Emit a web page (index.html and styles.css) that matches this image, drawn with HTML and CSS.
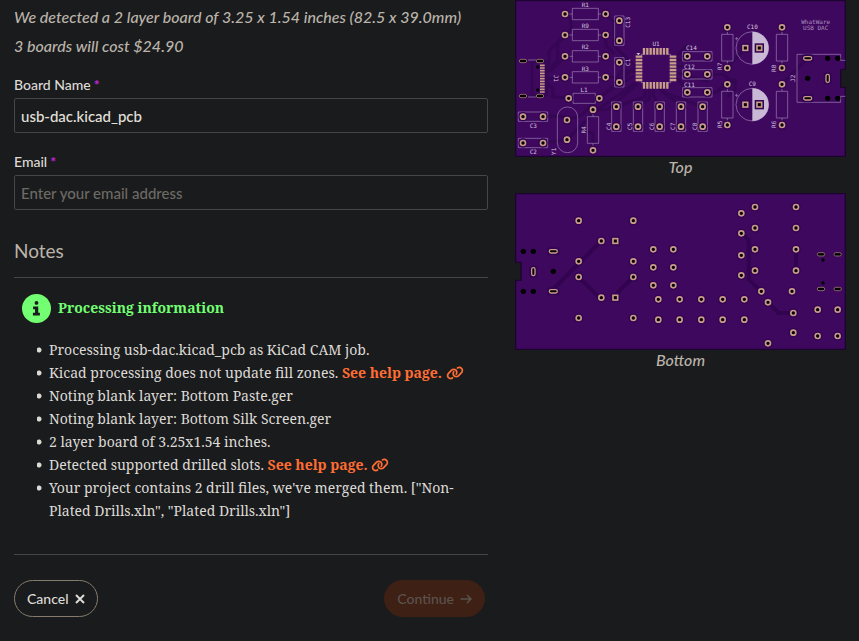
FILE: index.html
```html
<!DOCTYPE html>
<html lang="en">
<head>
<meta charset="utf-8">
<title>Board order</title>
<link rel="stylesheet" href="styles.css">
</head>
<body>
<svg class="defs" aria-hidden="true">
  <defs>
    <g id="pad"><circle class="halo" r="14"/><circle class="ring" r="7.5"/></g>
    <g id="sq"><rect class="halo" x="-14" y="-14" width="28" height="28"/><rect class="ring" x="-7" y="-7" width="14" height="14"/></g>
    <g id="slot"><rect class="halo" x="-18" y="-12" width="36" height="24" rx="8"/><rect class="ring thin" x="-12" y="-5" width="24" height="10" rx="5"/></g>
    <g id="slotv"><use href="#slot" transform="rotate(90)"/></g>
    <g id="usb"><rect class="ring dark" x="-11" y="-5" width="22" height="10" rx="5"/></g>
    <g id="hole"><circle r="8"/></g>
    <g id="resh"><path class="silk" d="M-52 0h14m76 0h14M-39-17h78v34h-78z"/><use href="#pad" x="-61"/><use href="#pad" x="61"/></g>
    <g id="resv"><path class="silk" d="M0-52v12m0 80v12M-17-40h34v80h-34z"/><use href="#pad" y="-61"/><use href="#pad" y="61"/></g>
    <g id="caph"><path class="silk" d="M-44-14h88v28h-88z"/><use href="#pad" x="-30"/><use href="#pad" x="30"/></g>
    <g id="capv"><path class="silk" d="M-14-44h28v88h-28z"/><use href="#pad" y="-30"/><use href="#pad" y="30"/></g>
    <g id="elco"><circle class="silk" r="49"/><path class="fill" d="M0-49a49 49 0 0 1 0 98z"/><path class="silk" d="M-52-28h10m-5-5v10"/><use href="#sq" x="-21"/><use href="#sq" x="21"/></g>
    <path id="pins" class="pins" d="M-36 0v20m10-20v20m10-20v20m10-20v20m10-20v20m10-20v20m10-20v20m10-20v20"/>
    <path id="link" d="M579.800 267.700c56.500-56.500 56.500-148 0-204.500c-50-50-128.800-56.500-186.300-15.400l-1.600 1.100c-14.400 10.300-17.700 30.300-7.400 44.600s30.300 17.700 44.600 7.400l1.600-1.100c32.100-22.900 76-19.300 103.800 8.600c31.500 31.500 31.500 82.500 0 114L422.300 334.800c-31.500 31.500-82.500 31.500-114 0c-27.900-27.900-31.500-71.800-8.600-103.800l1.100-1.600c10.300-14.400 6.900-34.400-7.400-44.600s-34.400-6.900-44.600 7.400l-1.100 1.600C206.500 251.200 213 330 263 380c56.500 56.500 148 56.500 204.500 0L579.800 267.700zM60.200 244.300c-56.500 56.500-56.500 148 0 204.500c50 50 128.800 56.500 186.300 15.400l1.600-1.100c14.400-10.300 17.700-30.300 7.400-44.600s-30.300-17.700-44.600-7.400l-1.600 1.100c-32.100 22.900-76 19.300-103.800-8.600C74 372 74 321 105.500 289.500L217.700 177.200c31.500-31.500 82.500-31.500 114 0c27.900 27.900 31.500 71.800 8.600 103.900l-1.100 1.600c-10.300 14.400-6.900 34.400 7.400 44.600s34.400 6.900 44.600-7.400l1.100-1.600C433.500 260.800 427 182 377 132c-56.500-56.500-148-56.500-204.500 0L60.200 244.300z"/>
  </defs>
</svg>
<main class="page">
  <form class="order">
    <p class="lead">We detected a 2 layer board of 3.25 x 1.54 inches (82.5 x 39.0mm)</p>
    <p class="lead">3 boards will cost $24.90</p>
    <div class="field">
      <label for="name">Board Name<span class="req">*</span></label>
      <input id="name" type="text" value="usb-dac.kicad_pcb">
    </div>
    <div class="field">
      <label for="email">Email<span class="req">*</span></label>
      <input id="email" type="email" placeholder="Enter your email address">
    </div>
    <h2>Notes</h2>
    <section class="notes">
      <h3><svg class="info" viewBox="0 0 30 30" aria-hidden="true"><circle cx="15" cy="15" r="15"/><path d="M15 7.200a2 2 0 1 1 0 4a2 2 0 1 1 0-4zM11.500 13h5.300v6.500h1.700v2.800h-7.200v-2.800h2.200v-3.700h-2z"/></svg>Processing information</h3>
      <ul>
        <li>Processing usb-dac.kicad_pcb as KiCad CAM job.</li>
        <li>Kicad processing does not update fill zones. <a href="#fill">See help page. <svg class="chain" viewBox="0 0 640 512" aria-hidden="true"><use href="#link"/></svg></a></li>
        <li>Noting blank layer: Bottom Paste.ger</li>
        <li>Noting blank layer: Bottom Silk Screen.ger</li>
        <li>2 layer board of 3.25x1.54 inches.</li>
        <li>Detected supported drilled slots. <a href="#slots">See help page. <svg class="chain" viewBox="0 0 640 512" aria-hidden="true"><use href="#link"/></svg></a></li>
        <li>Your project contains 2 drill files, we've merged them. ["Non-Plated Drills.xln", "Plated Drills.xln"]</li>
      </ul>
    </section>
    <div class="actions">
      <button type="button" class="cancel">Cancel <svg viewBox="0 0 10 10" aria-hidden="true"><path d="M1 1l8 8m0-8l-8 8"/></svg></button>
      <button type="submit" class="go" disabled>Continue <svg class="arrow" viewBox="0 0 12 10" aria-hidden="true"><path d="M0.500 5h10.500M7 1l4 4l-4 4"/></svg></button>
    </div>
  </form>
  <div class="boards">
    <figure>
      <svg class="board" viewBox="15 0 993 471" role="img" aria-label="Top side">
        <path class="substrate" d="M17 2h989v206h-14v54h14v207h-989z"/>
        <g class="traces">
          <path d="M165 105l-48 48v38l-17 17M165 169l-40 40-22 10M165 42l18 18v30l-40 40v50l-30 34M103 235h62M100 245l28 20v25l48 5M287 42l25 25v70l60 60M287 232h35l15-18h40M287 105v30l26 26M99 349h72M99 428l72-9M171 360l40-12 60-60 100-60M171 419l35-35 50-50 120-85M249 328h45l90-78M249 451v-50l-40-15M268 295l110-95M405 262v28l-86 29M418 262v35l-34 22M430 262v25l19 32M443 262l70 57M460 262v15l118 42M498 180h40M498 200h34M498 220h30l16 10 50 15M498 232l40 45M650 205l56-61M592 223h50l20 20h20M592 277h30l35-38h18v30l-23 22M893 175l-77 77M498 170l34-35"/>
          <path d="M66 185v102M110 185v102M66 185h44M66 287h44"/>
        </g>
        <use href="#resh" x="226" y="42"/><use href="#resh" x="226" y="105"/><use href="#resh" x="226" y="169"/><use href="#resh" x="226" y="232"/>
        <path class="silk" d="M189 280h67v30h-67z"/><use href="#pad" x="176" y="295"/><use href="#pad" x="268" y="295"/>
        <use href="#capv" x="328" y="92"/><use href="#capv" x="328" y="217"/>
        <use href="#caph" x="69" y="350"/><use href="#caph" x="69" y="429"/>
        <rect class="silk" x="142" y="321" width="61" height="137" rx="30"/><use href="#pad" x="171" y="360"/><use href="#pad" x="171" y="419"/>
        <use href="#resv" x="249" y="390"/>
        <use href="#capv" x="319" y="350"/><use href="#capv" x="384" y="350"/><use href="#capv" x="449" y="350"/><use href="#capv" x="513" y="350"/><use href="#capv" x="578" y="350"/>
        <path class="silk" d="M394 170v-7h7M474 163h8v7M394 241v7h7M482 241v7h-8M54 180h24M54 291h24"/><path class="fill" d="M379 159h12l-6 7z"/>
        <use href="#pins" x="438" y="144"/><use href="#pins" x="438" y="246"/>
        <use href="#pins" transform="translate(397 206) rotate(90)"/><use href="#pins" transform="translate(499 206) rotate(90)"/>
        <path class="pins usb" d="M90 196h14m-14 8h14m-14 8h14m-14 8h14m-14 8h14m-14 8h14m-14 8h14m-14 8h14m-14 8h14m-14 8h14m-14 8h14"/>
        <circle cx="83" cy="201" r="5"/><circle cx="83" cy="270" r="5"/>
        <use href="#usb" x="39" y="183"/><use href="#usb" x="90" y="183"/><use href="#usb" x="39" y="288"/><use href="#usb" x="90" y="288"/>
        <use href="#caph" x="562" y="169"/><use href="#caph" x="562" y="223"/><use href="#caph" x="562" y="277"/>
        <use href="#resv" x="652" y="143"/><use href="#resv" x="652" y="314"/><use href="#resv" x="816" y="143"/><use href="#resv" x="816" y="314"/>
        <use href="#elco" x="727" y="144"/><use href="#elco" x="727" y="314"/>
        <path class="silk" d="M1006 181h-14v-18h-131v144h131v-18h14"/>
        <use href="#slot" x="893" y="175"/><use href="#slot" x="893" y="295"/><use href="#slotv" x="953" y="235"/>
        <use href="#hole" x="953" y="175"/><use href="#hole" x="983" y="175"/><use href="#hole" x="893" y="235"/><use href="#hole" x="953" y="295"/><use href="#hole" x="983" y="295"/>
        <g class="ref">
          <text x="226" y="20">R1</text><text x="226" y="83">R9</text><text x="226" y="147">R2</text><text x="226" y="212">R3</text><text x="222" y="277">L1</text>
          <text x="438" y="138">U1</text><text x="70" y="384">C3</text><text x="70" y="462">C2</text>
          <text x="544" y="151">C14</text><text x="538" y="206">C12</text><text x="538" y="260">C11</text><text x="727" y="87">C10</text><text x="727" y="257">C9</text>
          <text transform="translate(359 67) rotate(-90)">C13</text><text transform="translate(359 187) rotate(-90)">C1</text>
          <text transform="translate(132 235) rotate(90)">J1</text><text transform="translate(138 454) rotate(-90)">Y1</text><text transform="translate(228 390) rotate(-90)">R4</text>
          <text transform="translate(302 379) rotate(-90)">C4</text><text transform="translate(367 379) rotate(-90)">C5</text><text transform="translate(432 379) rotate(-90)">C6</text><text transform="translate(496 379) rotate(-90)">C7</text><text transform="translate(561 379) rotate(-90)">C8</text>
          <text transform="translate(635 199) rotate(-90)">R7</text><text transform="translate(635 373) rotate(-90)">R5</text><text transform="translate(799 205) rotate(-90)">R8</text><text transform="translate(799 373) rotate(-90)">R6</text><text transform="translate(855 235) rotate(-90)">J2</text>
          <text class="dim" x="917" y="71">WhatWare</text><text class="dim" x="917" y="90">USB DAC</text>
        </g>
      </svg>
      <figcaption>Top</figcaption>
    </figure>
    <figure>
      <svg class="board" viewBox="15 24 993 471" role="img" aria-label="Bottom side">
        <path class="substrate" d="M17 26h989v467h-989v-207h16v-54h-16z"/>
        <g class="traces wide"><path d="M274 168l-144 144M206 276l62 62M370 276l-62 62M694 145l22 20v118l38 36M774 352l32 32h44M858 193v64"/></g>
        <use href="#pad" x="206" y="107"/><use href="#pad" x="370" y="107"/><use href="#pad" x="274" y="168"/><use href="#pad" x="206" y="229"/><use href="#pad" x="370" y="229"/><use href="#pad" x="206" y="276"/><use href="#pad" x="370" y="276"/><use href="#pad" x="274" y="338"/><use href="#pad" x="206" y="399"/><use href="#pad" x="370" y="399"/>
        <use href="#sq" x="316" y="168"/><use href="#sq" x="316" y="338"/>
        <use href="#pad" x="430" y="193"/><use href="#pad" x="490" y="193"/><use href="#pad" x="430" y="247"/><use href="#pad" x="490" y="247"/><use href="#pad" x="430" y="301"/><use href="#pad" x="490" y="301"/>
        <use href="#pad" x="445" y="343"/><use href="#pad" x="509" y="343"/><use href="#pad" x="574" y="343"/><use href="#pad" x="638" y="343"/><use href="#pad" x="703" y="343"/>
        <use href="#pad" x="445" y="404"/><use href="#pad" x="509" y="404"/><use href="#pad" x="574" y="404"/><use href="#pad" x="638" y="404"/><use href="#pad" x="703" y="404"/>
        <use href="#slot" x="130" y="199"/><use href="#slot" x="130" y="319"/><use href="#slotv" x="70" y="260"/>
        <use href="#hole" x="40" y="199"/><use href="#hole" x="70" y="199"/><use href="#hole" x="130" y="259"/><use href="#hole" x="40" y="319"/><use href="#hole" x="70" y="319"/>
        <use href="#pad" x="694" y="85"/><use href="#pad" x="735" y="66"/><use href="#pad" x="694" y="145"/><use href="#pad" x="735" y="129"/><use href="#pad" x="735" y="193"/><use href="#pad" x="694" y="211"/><use href="#pad" x="735" y="257"/><use href="#pad" x="694" y="271"/><use href="#pad" x="754" y="319"/><use href="#pad" x="774" y="352"/><use href="#pad" x="774" y="475"/>
        <use href="#pad" x="858" y="66"/><use href="#pad" x="858" y="129"/><use href="#pad" x="858" y="193"/><use href="#pad" x="858" y="257"/><use href="#pad" x="846" y="319"/><use href="#pad" x="850" y="384"/><use href="#pad" x="850" y="443"/>
        <use href="#pad" x="923" y="374"/><use href="#pad" x="983" y="374"/><use href="#pad" x="923" y="453"/><use href="#pad" x="983" y="453"/>
        <use href="#usb" x="933" y="208"/><use href="#usb" x="983" y="208"/><use href="#usb" x="933" y="312"/><use href="#usb" x="983" y="312"/>
        <circle cx="939" cy="225" r="5"/><circle cx="939" cy="294" r="5"/>
      </svg>
      <figcaption>Bottom</figcaption>
    </figure>
  </div>
</main>
</body>
</html>
```
FILE: styles.css
```css
* { box-sizing: border-box; }
body {
  margin: 0;
  background: #1a1b1d;
  color: #dddad5;
  font-family: Lato, "Noto Sans", sans-serif;
  font-size: 14px;
}
.defs { position: absolute; width: 0; height: 0; }
.page {
  display: grid;
  grid-template-columns: 474fr 331fr;
  gap: 27px;
  padding: 0 13px 24px 14px;
}
.order { padding-top: 1px; }
.lead {
  margin: 0;
  padding-top: 3px;
  font-size: 16px;
  font-style: italic;
  font-weight: 500;
  line-height: 26px;
  color: #bbb4aa;
}
.field { margin-top: 19px; }
.lead + .field { margin-top: 16px; }
label { display: block; line-height: 20px; margin-bottom: 3px; font-weight: 500; }
.req { margin-left: 3px; color: #c026d3; font-weight: 700; }
input {
  display: block;
  width: 100%;
  height: 35px;
  padding: 0 6px;
  border: 1px solid #43474a;
  border-radius: 2px;
  background: transparent;
  color: #e3e0dc;
  font: 500 15px Lato, "Noto Sans", sans-serif;
}
input::placeholder { color: #6d6a65; opacity: 1; }
h2 {
  margin: 28px 0 0;
  padding-bottom: 13px;
  border-bottom: 1px solid #43474a;
  font-size: 19px;
  font-weight: 400;
  line-height: 26px;
  color: #bbb4aa;
}
.notes {
  padding: 15px 8px 32px;
  border-bottom: 1px solid #43474a;
  font-family: "Noto Serif", "Droid Serif", "Liberation Serif", serif;
  line-height: 23px;
}
h3 {
  display: flex;
  align-items: center;
  gap: 7px;
  margin: 0;
  font-size: 14px;
  line-height: 30px;
  color: #72ff72;
}
.info { width: 29px; height: 29px; fill: #72ff72; }
.info path { fill: #1a1b1d; }
ul { margin: 15px 0 0; padding-left: 15px; list-style: none; }
li {
  padding-left: 12px;
  background: radial-gradient(circle at 2px 12px, #dddad5 2px, transparent 3px) no-repeat;
}
a { color: #ff6d33; font-weight: 700; text-decoration: none; }
.chain { width: 18px; height: 14px; fill: currentColor; vertical-align: -2px; }
.actions { display: flex; justify-content: space-between; padding: 25px 3px 0 0; }
button {
  display: flex;
  align-items: center;
  gap: 6px;
  height: 37px;
  padding: 0 12px;
  border: 1px solid #857b6c;
  border-radius: 19px;
  background: transparent;
  color: #dddad5;
  font: 500 14px Lato, "Noto Sans", sans-serif;
}
button svg { width: 10px; height: 10px; fill: none; stroke: currentColor; stroke-width: 2; }
button .arrow { width: 12px; stroke-width: 1.5; }
.go { border-color: #3f2015; background: #3f2015; color: #5a524c; }
figure { margin: 0 0 16px; }
.board { display: block; width: 100%; }
figcaption {
  font-size: 16px;
  font-style: italic;
  font-weight: 500;
  line-height: 20px;
  text-align: center;
  color: #bbb4aa;
}
.substrate { fill: #3f085f; stroke: #1d0430; stroke-width: 4; }
.traces { fill: none; stroke: #350653; stroke-width: 9; }
.wide { stroke: #320450; stroke-width: 12; }
.halo { fill: #300450; }
.ring { fill: #000; stroke: #c99a89; stroke-width: 5; }
.thin { stroke-width: 4; }
.dark { stroke: #866762; stroke-width: 3; }
.silk { fill: none; stroke: #9d83b3; stroke-width: 2; }
.fill { fill: #c9b9d6; }
.pins { stroke: #c99f8a; stroke-width: 7; }
.usb { stroke-width: 5; }
.ref { fill: #d3c4de; font: 18px "DejaVu Sans Mono", monospace; text-anchor: middle; }
.dim { fill: #a98fbd; }
```
